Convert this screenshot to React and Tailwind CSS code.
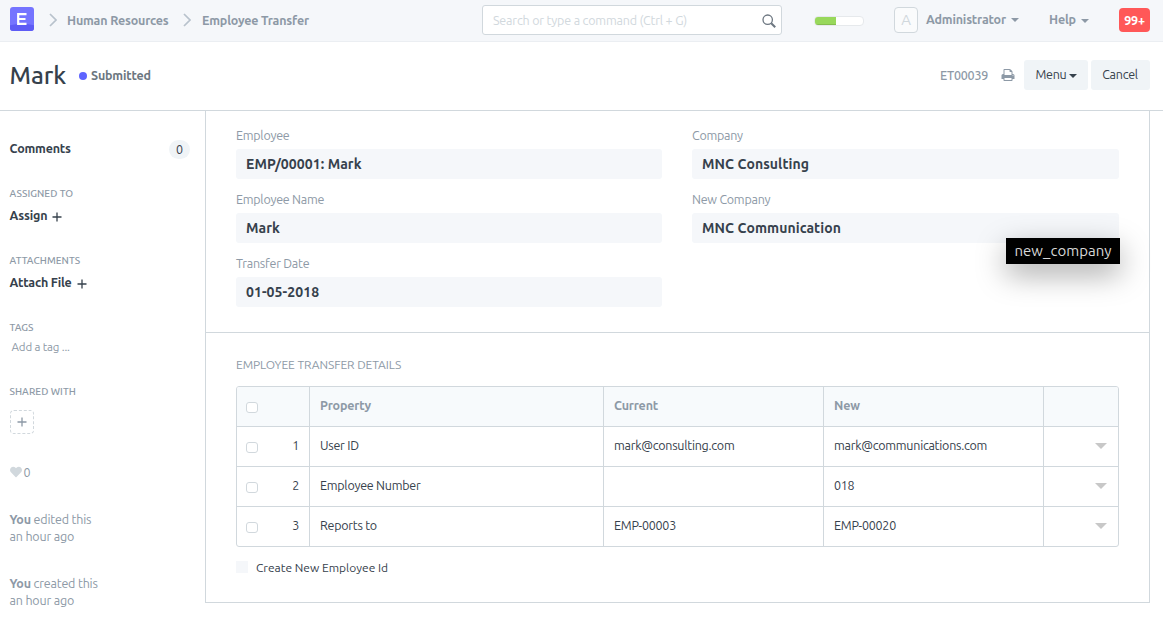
import { FaHeart } from "react-icons/fa";

const rows = [
  { n: 1, property: "User ID", current: "mark@consulting.com", next: "mark@communications.com" },
  { n: 2, property: "Employee Number", current: "", next: "018" },
  { n: 3, property: "Reports to", current: "EMP-00003", next: "EMP-00020" },
];

function Caret({ className = "" }) {
  return (
    <svg className={className} width="8" height="4" viewBox="0 0 8 4" fill="currentColor">
      <path d="M0 0h8L4 4z" />
    </svg>
  );
}

function Chevron() {
  return (
    <svg className="text-[#b8c2cc]" width="8" height="14" viewBox="0 0 8 14" fill="none" stroke="currentColor" strokeWidth="1.7">
      <path d="M1 1l6 6-6 6" />
    </svg>
  );
}

function Plus({ size = 10, className = "" }) {
  return (
    <svg className={className} width={size} height={size} viewBox="0 0 10 10" stroke="currentColor" strokeWidth="1.3">
      <path d="M5 0.5v9M0.5 5h9" />
    </svg>
  );
}

function Printer({ className = "" }) {
  return (
    <svg className={className} width="14" height="12" viewBox="0 0 1664 1536" fill="currentColor">
      <path d="M384 1408h896v-256H384v256zM384 768h896V384h-160q-40 0-68-28t-28-68V128H384v640zM1536 832q0-26-19-45t-45-19-45 19-19 45 19 45 45 19 45-19 19-45zM1664 832v416q0 13-9.500 22.500t-22.500 9.500h-224v160q0 40-28 68t-68 28H352q-40 0-68-28t-28-68v-160H32q-13 0-22.500-9.500T0 1248V832q0-79 56.500-135.500T192 640h64V96q0-40 28-68t68-28h672q40 0 88 20t76 48l152 152q28 28 48 76t20 88v256h64q79 0 135.500 56.500T1664 832z" />
    </svg>
  );
}

function Navbar() {
  return (
    <header className="flex h-[42px] items-start border-b border-[#ebeef2] bg-[#f5f7fa] pl-[10px] pr-[13px] font-bold tracking-[-0.18px] text-[#8d99a6]">
      <svg className="mt-[7px] shrink-0" width="24" height="24" viewBox="0 0 24 24">
        <rect width="24" height="24" rx="3" fill="#7574ff" />
        <path d="M0 18.2Q12 15.6 24 18.2V21a3 3 0 0 1-3 3H3a3 3 0 0 1-3-3z" fill="#5e5cf5" />
        <path d="M16.500 7.200H8.200v9.600H16.500M8.200 12h7.300" fill="none" stroke="#fff" strokeWidth="2.2" />
      </svg>
      <div className="mt-[11px] flex h-[18px] items-center">
        <div className="ml-[15px]"><Chevron /></div>
        <a className="ml-[10px] w-[102px] whitespace-nowrap">Human Resources</a>
        <div className="ml-[14px]"><Chevron /></div>
        <a className="ml-[11px] w-[108px] whitespace-nowrap">Employee Transfer</a>
      </div>
      <div className="ml-[172px] mt-[5px] flex h-[30px] w-[300px] items-center justify-between rounded-[3px] border border-[#d1d8dd] bg-white pl-[10px] pr-[5px] font-normal text-[#d1d8dd]">
        <span>Search or type a command (Ctrl + G)</span>
        <svg className="mt-[2px] text-[#6c7680]" width="14" height="14" viewBox="0 0 14 14" fill="none" stroke="currentColor">
          <circle cx="5.7" cy="5.7" r="4.7" strokeWidth="1.3" />
          <path d="M9.200 9.200l4 4" strokeWidth="2" />
        </svg>
      </div>
      <div className="ml-[32px] mt-[16px] h-[10px] w-[50px] overflow-hidden rounded-[4px] border border-[#e6e9ec] bg-white">
        <div className="h-full w-[21px] bg-[#98d85b] shadow-[inset_0_-1px_0_rgba(0,0,0,0.12)]" />
      </div>
      <div className="ml-[30px] mt-[7px] flex h-[26px] w-[24px] items-center justify-center rounded-[4px] border border-[#d1d8dd] bg-[#fafbfc] text-[15px] font-normal text-[#d1d8dd]">A</div>
      <div className="mt-[10px] flex h-[18px] items-center">
        <span className="ml-[8px] w-[81px]">Administrator</span>
        <Caret className="ml-[4px] mt-[2px]" />
        <span className="ml-[30px] w-[28px]">Help</span>
        <Caret className="ml-[4px] mt-[3px]" />
      </div>
      <span className="ml-auto mt-[8px] flex h-[24px] w-[31px] items-center justify-center rounded-[4px] bg-[#ff5858] pb-px text-white">99+</span>
    </header>
  );
}

function PageHead() {
  return (
    <div className="flex h-[69px] items-center border-b border-[#d1d8dd] pb-[2px] pl-[9px] pr-[13px]">
      <h1 className="w-[70px] pl-[0.5px] pt-px text-[24.5px] font-medium leading-[27px] tracking-[-0.1px] text-[#36414c]">Mark</h1>
      <span className="mt-[2px] size-[8px] rounded-full bg-[#5e64ff]" />
      <span className="ml-[4px] font-bold tracking-[-0.18px] text-[#6c7680]">Submitted</span>
      <span className="ml-auto font-medium text-[#8d99a6]">ET00039</span>
      <Printer className="ml-[13px] text-[#8d99a6]" />
      <button className="ml-[9px] flex h-[30px] w-[64px] items-center justify-center gap-[2px] rounded-[3px] bg-[#f0f4f7] pb-[2px] text-[#36414c]">
        Menu
        <Caret className="mt-[4px]" />
      </button>
      <button className="ml-[3px] h-[30px] w-[59px] rounded-[3px] bg-[#f0f4f7] pb-[2px] pr-px text-[#36414c]">Cancel</button>
    </div>
  );
}

function SideLabel({ children }) {
  return <h6 className="text-[10px] font-medium uppercase leading-[12px] tracking-[0.05px] text-[#8d99a6]">{children}</h6>;
}

function SideAction({ children }) {
  return (
    <div className="mb-[31px] mt-[6px] flex h-[18px] items-center font-bold tracking-[-0.18px] text-[#36414c]">
      {children}
      <Plus className="ml-[5px] mt-[3px]" />
    </div>
  );
}

function Sidebar() {
  return (
    <aside className="w-[205px] shrink-0 pl-[9.5px] pr-[15px] text-[#8d99a6]">
      <div className="mt-[28px] flex h-[20px] items-center justify-between font-bold text-[#36414c]">
        <span className="pb-[2px] tracking-[-0.2px]">Comments</span>
        <span className="flex h-[19px] w-[21px] items-center justify-center rounded-full bg-[#f0f4f7] pb-px font-normal">0</span>
      </div>
      <div className="mt-[29px]"><SideLabel>Assigned To</SideLabel></div>
      <SideAction>Assign</SideAction>
      <SideLabel>Attachments</SideLabel>
      <SideAction>Attach File</SideAction>
      <SideLabel>Tags</SideLabel>
      <div className="mt-[5px] h-[16px] pl-[2px] text-[11.5px] leading-[16px] tracking-[-0.15px]">Add a tag ...</div>
      <div className="mt-[31px]"><SideLabel>Shared With</SideLabel></div>
      <div className="mt-[12px] flex size-[24px] items-center justify-center rounded-[4px] border border-dashed border-[#d1d8dd]"><Plus /></div>
      <div className="mt-[29px] flex h-[18px] items-center gap-[2px]"><FaHeart className="text-[#d1d8dd]" size={12} />0</div>
      <p className="mt-[30px] leading-[17px] tracking-[-0.18px]"><b>You</b> edited this<br />an hour ago</p>
      <p className="mt-[30px] leading-[17px] tracking-[-0.18px]"><b>You</b> created this<br />an hour ago</p>
    </aside>
  );
}

function Field({ label, value, children }) {
  return (
    <div className="relative mb-[10px]">
      <div className="mb-[4px] h-[19px] leading-[19px] text-[#8d99a6]">{label}</div>
      <div className="flex h-[30px] items-center rounded-[3px] bg-[#f5f7fa] px-[10px] text-[14px] font-bold tracking-[0.08px] text-[#36414c]">{value}</div>
      {children}
    </div>
  );
}

function Check() {
  return <span className="h-[11px] w-[12px] rounded-[3px] border border-[#d1d8dd] bg-white" />;
}

function Table() {
  const cols = "grid grid-cols-[72px_294px_220px_220px_1fr]";
  const cell = "flex items-center border-l border-[#d1d8dd] pl-[10px] pb-[3px]";
  return (
    <div className="overflow-hidden rounded-[3px] border border-[#d1d8dd] text-[#36414c]">
      <div className={`${cols} h-[39px] bg-[#f7fafc] font-bold tracking-[-0.18px] text-[#8d99a6]`}>
        <div className="flex items-center pl-[9px] pt-[2px]"><Check /></div>
        <div className={cell}>Property</div>
        <div className={cell}>Current</div>
        <div className={cell}>New</div>
        <div className={cell} />
      </div>
      {rows.map((r) => (
        <div key={r.n} className={`${cols} h-[40px] border-t border-[#d1d8dd]`}>
          <div className="flex items-center justify-between pl-[9px] pr-[10px]">
            <span className="flex pt-[2px]"><Check /></span>
            <span className="pb-[3px]">{r.n}</span>
          </div>
          <div className={cell}>{r.property}</div>
          <div className={cell}>{r.current}</div>
          <div className={cell}>{r.next}</div>
          <div className="flex items-center justify-end border-l border-[#d1d8dd] pb-px pr-[11px]">
            <svg width="12" height="6" viewBox="0 0 12 6" fill="#c8c8c8"><path d="M0 0h12L6 6z" /></svg>
          </div>
        </div>
      ))}
    </div>
  );
}

function Form() {
  return (
    <main className="mr-[13px] h-[492px] flex-1 border-x border-b border-[#d1d8dd]">
      <section className="grid h-[222px] grid-cols-[426px_427px] content-start gap-x-[30px] border-b border-[#d1d8dd] pl-[30px] pt-[15px]">
        <div>
          <Field label="Employee" value="EMP/00001: Mark" />
          <div className="mt-[11px]"><Field label="Employee Name" value="Mark" /></div>
          <div className="mt-[11px]"><Field label="Transfer Date" value="01-05-2018" /></div>
        </div>
        <div>
          <Field label="Company" value="MNC Consulting" />
          <div className="mt-[11px]">
            <Field label="New Company" value="MNC Communication">
              <div className="absolute right-[-1px] top-[48px] flex h-[26px] w-[114px] items-center justify-center bg-black text-[15px] tracking-[0.05px] text-[#d8d8d8] shadow-[0_10px_30px_rgba(0,0,0,0.35)]">new_company</div>
            </Field>
          </div>
        </div>
      </section>
      <section className="pl-[30px] pr-[30px] pt-[23px]">
        <h4 className="mb-[12px] h-[18px] text-[12px] uppercase leading-[18px] tracking-[-0.08px] text-[#8d99a6]">Employee Transfer Details</h4>
        <Table />
        <label className="mt-[12px] flex h-[18px] items-center text-[12px] tracking-normal text-[#36414c]">
          <span className="mb-[2px] mr-[8px] size-[12px] bg-[#f5f7fa]" />
          Create New Employee Id
        </label>
      </section>
    </main>
  );
}

export default function App() {
  return (
    <div className="h-[631px] w-[1163px] overflow-hidden bg-white font-[Ubuntu,'Noto_Sans',sans-serif] text-[12.5px] leading-[18px] tracking-[-0.25px]">
      <Navbar />
      <PageHead />
      <div className="flex">
        <Sidebar />
        <Form />
      </div>
    </div>
  );
}
